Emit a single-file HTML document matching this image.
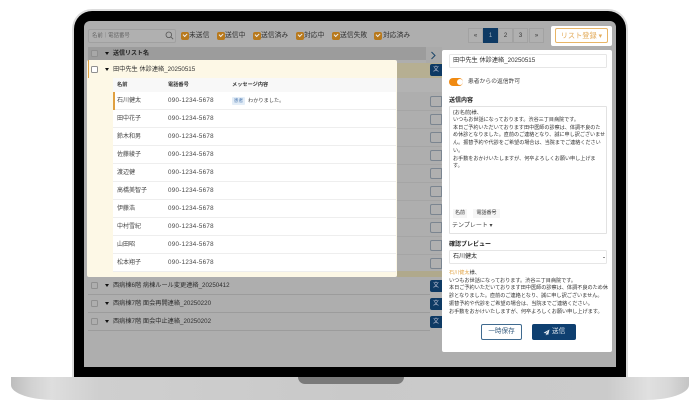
<!DOCTYPE html>
<html lang="ja">
<head>
<meta charset="utf-8">
<style>
html,body{margin:0;padding:0;background:#fff}
body{width:700px;height:410px;overflow:hidden;position:relative;font-family:"Liberation Sans","Noto Sans CJK JP",sans-serif;color:#444}
div,span{position:absolute;box-sizing:border-box;white-space:nowrap}
#w{left:0;top:0;width:700px;height:410px;filter:blur(.3px)}
.t{font-size:6.4px;line-height:10px;height:10px}
.cb{width:8px;height:8px;background:#b8791c;border-radius:2px}
.cb:after{content:"";position:absolute;left:2px;top:1.4px;width:3.4px;height:2px;border-left:1px solid #eee;border-bottom:1px solid #eee;transform:rotate(-45deg)}
.lb{font-size:6.8px;line-height:10px;top:30.5px;color:#333}
.sq{width:7px;height:7px;border:.7px solid #8f8f8f;border-radius:1.5px}
.ar{width:0;height:0;border-left:2.6px solid transparent;border-right:2.6px solid transparent;border-top:3.4px solid #111}
.row{left:113px;width:283px;height:18px;background:#fff;border-bottom:.7px solid #eee}
.nm{left:117px;font-size:6px;line-height:10px;color:#444}
.tel{left:168px;font-size:6.2px;line-height:10px;color:#444;letter-spacing:.3px}
.th{font-size:5.2px;font-weight:bold;line-height:10px;top:80px;color:#333}
.ob{left:430px;width:12px;height:11px;border:.7px solid #7b8590;border-radius:2px 0 0 2px;background:#b0b0b0}
.bb{left:430px;width:12px;height:12px;background:#0e3a64;border-radius:2px 0 0 2px;color:#ccd;font-size:6px;line-height:12px;padding-left:3px}
.ln{left:397px;width:45px;height:.7px;background:#a5a5a5}
.gl{left:88px;width:342px;height:.7px;background:#9c9c9c}
.gt{left:113px;font-size:6.2px;line-height:10px;color:#2e2e2e}
.pg{top:28px;width:15px;height:15px;border:.7px solid #a2a2a2;background:#b0b0b0;font-size:6px;line-height:14px;text-align:center;color:#333}
.ta{left:453px;font-size:5.1px;line-height:7.7px;color:#333}
.pv{left:449px;font-size:5.15px;line-height:7.7px;color:#333}
</style>
</head>
<body>
<div id="w">
<!-- base -->
<div style="left:11px;top:377px;width:678px;height:23px;border-radius:0 0 44px 44px/0 0 15px 15px;background:linear-gradient(90deg,#bdbdbd 0,#d2d2d2 3%,#dedede 6%,#cfcfcf 13%,#c9c9c9 50%,#cbcbcb 88%,#e0e0e0 94%,#d8d8d8 97%,#c4c4c4 100%)"></div>
<div style="left:298px;top:377px;width:106px;height:7px;background:#7a7a7a;border-radius:0 0 8px 8px"></div>
<!-- lid -->
<div style="left:72px;top:9px;width:556px;height:368px;background:#dcdcdc;border-radius:20px 20px 0 0"></div>
<div style="left:74px;top:11px;width:552px;height:366px;background:#000;border-radius:18px 18px 0 0"></div>
<!-- screen -->
<div style="left:84px;top:21px;width:532px;height:346px;background:#aeaeae;border-radius:6px 6px 0 0"></div>

<!-- toolbar -->
<div style="left:88px;top:29px;width:88px;height:14px;border:.7px solid #a0a0a0;border-radius:2px;background:#b0b0b0"></div>
<div class="t" style="left:92px;top:31px;font-size:5.4px;color:#666">名前｜電話番号</div>
<svg style="position:absolute;left:165px;top:31px" width="9" height="9" viewBox="0 0 9 9"><circle cx="3.8" cy="3.8" r="2.8" fill="none" stroke="#555" stroke-width=".8"/><path d="M5.9 5.9L8.2 8.2" stroke="#555" stroke-width=".8"/></svg>
<div class="cb" style="left:181px;top:31.5px"></div><div class="lb" style="left:189px">未送信</div>
<div class="cb" style="left:217px;top:31.5px"></div><div class="lb" style="left:225px">送信中</div>
<div class="cb" style="left:253px;top:31.5px"></div><div class="lb" style="left:261px">送信済み</div>
<div class="cb" style="left:296px;top:31.5px"></div><div class="lb" style="left:304px">対応中</div>
<div class="cb" style="left:332px;top:31.5px"></div><div class="lb" style="left:340px">送信失敗</div>
<div class="cb" style="left:374px;top:31.5px"></div><div class="lb" style="left:383px">対応済み</div>

<!-- pagination -->
<div class="pg" style="left:468px">«</div>
<div class="pg" style="left:483px;background:#0e3a64;border-color:#0e3a64;color:#9fb0c0">1</div>
<div class="pg" style="left:498px">2</div>
<div class="pg" style="left:513px">3</div>
<div class="pg" style="left:529px">»</div>
<div style="left:551px;top:26px;width:61px;height:20px;background:#fff;border-radius:2px"></div>
<div style="left:555px;top:28px;width:53px;height:15px;border:.8px solid #e8b566;border-radius:2px;background:#fff;color:#e3ac5c;font-size:7.2px;line-height:14px;text-align:center">リスト登録 ▾</div>

<!-- list header -->
<div style="left:88px;top:47px;width:354px;height:13px;background:#9c9c9c"></div>
<div style="left:426px;top:47px;width:16px;height:17px;background:#aaa"></div>
<div class="sq" style="left:91px;top:50px;background:#a8a8a8"></div>
<div class="ar" style="left:105px;top:52px"></div>
<div class="t" style="left:113px;top:48.5px;font-size:6px;font-weight:bold;color:#222">送信リスト名</div>
<svg style="position:absolute;left:430px;top:51px" width="7" height="9" viewBox="0 0 7 9"><path d="M1.5 1L5 4.5L1.5 8" fill="none" stroke="#1b4468" stroke-width="1"/></svg>

<!-- dim strips right of card -->
<div style="left:397px;top:63px;width:45px;height:15px;background:#b6af92"></div>
<div style="left:397px;top:78px;width:45px;height:14px;background:#b3b3b3"></div>
<div style="left:397px;top:271px;width:45px;height:6px;background:#b0a98c"></div>
<div class="ln" style="top:110px"></div><div class="ln" style="top:128px"></div><div class="ln" style="top:146px"></div><div class="ln" style="top:164px"></div><div class="ln" style="top:182px"></div><div class="ln" style="top:200px"></div><div class="ln" style="top:218px"></div><div class="ln" style="top:236px"></div><div class="ln" style="top:254px"></div>

<div class="bb" style="top:64px">文</div>
<div class="ob" style="top:96px"></div>
<div class="ob" style="top:114px"></div>
<div class="ob" style="top:132px"></div>
<div class="ob" style="top:150px"></div>
<div class="ob" style="top:168px"></div>
<div class="ob" style="top:186px"></div>
<div class="ob" style="top:204px"></div>
<div class="ob" style="top:222px"></div>
<div class="ob" style="top:240px"></div>
<div class="ob" style="top:258px"></div>
<div class="bb" style="top:280px">文</div>
<div class="bb" style="top:298px">文</div>
<div class="bb" style="top:316px">文</div>

<!-- highlight card -->
<div style="left:87px;top:60px;width:310px;height:217px;background:#fdf8e6;border-radius:2px"></div>
<div style="left:88px;top:60px;width:1.4px;height:18px;background:#e0a040"></div>
<div class="sq" style="left:91px;top:66px;background:#fff"></div>
<div class="ar" style="left:105px;top:68px"></div>
<div class="t" style="left:113px;top:64.5px;font-size:6.2px;color:#333">田中先生 休診連絡_20250515</div>

<div style="left:113px;top:78px;width:283px;height:14px;background:#f8f8f8"></div>
<div class="th" style="left:117px">名前</div>
<div class="th" style="left:168px">電話番号</div>
<div class="th" style="left:232px">メッセージ内容</div>

<div class="row" style="top:92px"></div>
<div class="row" style="top:110px"></div>
<div class="row" style="top:128px"></div>
<div class="row" style="top:146px"></div>
<div class="row" style="top:164px"></div>
<div class="row" style="top:182px"></div>
<div class="row" style="top:200px"></div>
<div class="row" style="top:218px"></div>
<div class="row" style="top:236px"></div>
<div class="row" style="top:254px"></div>
<div style="left:113px;top:92px;width:1.6px;height:18px;background:#e0a040"></div>

<div class="nm" style="top:96px">石川健太</div><div class="tel" style="top:96px">090-1234-5678</div>
<div style="left:232px;top:97px;width:13px;height:8px;background:#e3edf7;border-radius:1px;color:#4a78b0;font-size:4.6px;line-height:8px;text-align:center">患者</div>
<div style="left:248px;top:95.5px;font-size:5.2px;line-height:10px;color:#444">わかりました。</div>
<div class="nm" style="top:114px">田中花子</div><div class="tel" style="top:114px">090-1234-5678</div>
<div class="nm" style="top:132px">鈴木和男</div><div class="tel" style="top:132px">090-1234-5678</div>
<div class="nm" style="top:150px">佐藤綾子</div><div class="tel" style="top:150px">090-1234-5678</div>
<div class="nm" style="top:168px">渡辺健</div><div class="tel" style="top:168px">090-1234-5678</div>
<div class="nm" style="top:186px">高橋美智子</div><div class="tel" style="top:186px">090-1234-5678</div>
<div class="nm" style="top:204px">伊藤浩</div><div class="tel" style="top:204px">090-1234-5678</div>
<div class="nm" style="top:222px">中村雪紀</div><div class="tel" style="top:222px">090-1234-5678</div>
<div class="nm" style="top:240px">山田昭</div><div class="tel" style="top:240px">090-1234-5678</div>
<div class="nm" style="top:258px">松本翔子</div><div class="tel" style="top:258px">090-1234-5678</div>

<!-- rows below -->
<div class="sq" style="left:91px;top:282px"></div><div class="ar" style="left:105px;top:284px"></div><div class="gt" style="top:280.5px">西病棟6階 病棟ルール変更連絡_20250412</div><div class="gl" style="top:294px"></div>
<div class="sq" style="left:91px;top:300px"></div><div class="ar" style="left:105px;top:302px"></div><div class="gt" style="top:298.5px">西病棟7階 面会再開連絡_20250220</div><div class="gl" style="top:312px"></div>
<div class="sq" style="left:91px;top:318px"></div><div class="ar" style="left:105px;top:320px"></div><div class="gt" style="top:316.5px">西病棟7階 面会中止連絡_20250202</div><div class="gl" style="top:330px"></div>

<!-- right panel -->
<div style="left:442px;top:50px;width:170px;height:302px;background:#fff;border-radius:2px"></div>
<div style="left:449px;top:54px;width:158px;height:14px;border:.7px solid #e6e6e6;border-radius:1.5px;font-size:6.2px;line-height:12.5px;padding-left:3px;color:#333">田中先生 休診連絡_20250515</div>
<div style="left:449px;top:78px;width:14px;height:8px;background:#f08a12;border-radius:4px"></div>
<div style="left:457px;top:79px;width:6px;height:6px;background:#fff;border-radius:50%"></div>
<div style="left:468px;top:77px;font-size:5.8px;line-height:10px;color:#444">患者からの返信許可</div>
<div style="left:449px;top:96px;font-size:6px;font-weight:bold;line-height:10px;color:#222">送信内容</div>
<div style="left:449px;top:106px;width:158px;height:128px;border:.7px solid #e2e2e2;border-radius:1px"></div>
<div class="ta" style="top:109.5px">{お名前}様、</div>
<div class="ta" style="top:117px">いつもお世話になっております。渋谷三丁目病院です。</div>
<div class="ta" style="top:124.7px">本日ご予約いただいております田中医師の診察は、体調不良のた</div>
<div class="ta" style="top:132.4px">め休診となりました。直前のご連絡となり、誠に申し訳ございませ</div>
<div class="ta" style="top:140.1px">ん。振替予約や代診をご希望の場合は、当院までご連絡ください</div>
<div class="ta" style="top:147.8px">い。</div>
<div class="ta" style="top:155.5px">お手数をおかけいたしますが、何卒よろしくお願い申し上げま</div>
<div class="ta" style="top:163.2px">す。</div>
<div style="left:453px;top:209px;width:14px;height:9px;background:#f6f6f6;font-size:5px;line-height:9px;text-align:center;color:#333">名前</div>
<div style="left:473px;top:209px;width:27px;height:9px;background:#f6f6f6;font-size:5px;line-height:9px;text-align:center;color:#333">電話番号</div>
<div style="left:452px;top:221px;font-size:6px;line-height:10px;color:#444">テンプレート ▾</div>
<div style="left:449px;top:240px;font-size:6px;font-weight:bold;line-height:10px;color:#222">確認プレビュー</div>
<div style="left:449px;top:250px;width:158px;height:14px;border:.7px solid #e6e6e6;border-radius:1.5px;font-size:6px;line-height:12.5px;padding-left:3px;color:#222">石川健太</div>
<div style="left:603px;top:256.5px;width:0;height:0;border-left:1.2px solid transparent;border-right:1.2px solid transparent;border-top:1.6px solid #222"></div>
<div class="pv" style="top:270px"><span style="position:static;color:#e3a84e">石川健太</span>様、</div>
<div class="pv" style="top:277.7px">いつもお世話になっております。渋谷三丁目病院です。</div>
<div class="pv" style="top:285.4px">本日ご予約いただいております田中医師の診察は、体調不良のため休</div>
<div class="pv" style="top:293.1px">診となりました。直前のご連絡となり、誠に申し訳ございません。</div>
<div class="pv" style="top:300.8px">振替予約や代診をご希望の場合は、当院までご連絡ください。</div>
<div class="pv" style="top:308.5px">お手数をおかけいたしますが、何卒よろしくお願い申し上げます。</div>
<div style="left:481px;top:324px;width:41px;height:16px;border:.8px solid #3f6a8f;border-radius:2px;background:#fff;color:#3a5f80;font-size:6.6px;line-height:14.5px;text-align:center">一時保存</div>
<div style="left:532px;top:324px;width:44px;height:16px;background:#0e3f70;border-radius:2px;color:#d8e2ec;font-size:6.6px;line-height:15.5px;padding-left:20px">送信</div>
<svg style="position:absolute;left:543px;top:329px" width="7" height="7" viewBox="0 0 7 7"><path d="M6.5 .5L.6 3.7L2.3 4.4L5.4 1.8L2.9 4.8V6.5L3.9 5.3L5.2 5.9Z" fill="#e6edf4"/></svg>
</div>
</body>
</html>
